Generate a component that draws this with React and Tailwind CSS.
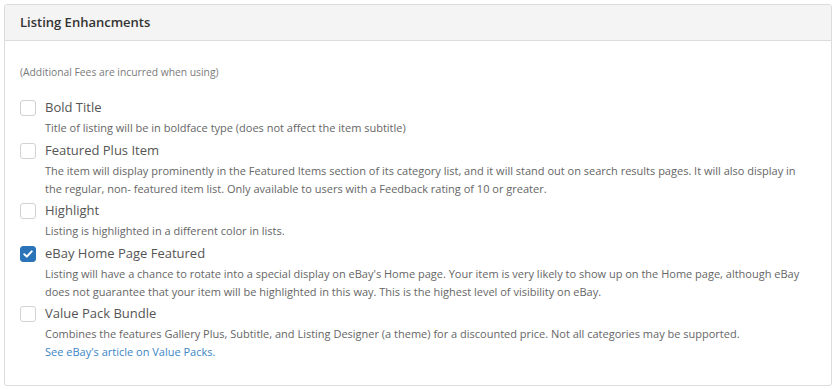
import React, { useState } from "react";

const items = [
  {
    title: "Bold Title",
    desc: "Title of listing will be in boldface type (does not affect the item subtitle)",
  },
  {
    title: "Featured Plus Item",
    desc: "The item will display prominently in the Featured Items section of its category list, and it will stand out on search results pages. It will also display in the regular, non- featured item list. Only available to users with a Feedback rating of 10 or greater.",
  },
  {
    title: "Highlight",
    desc: "Listing is highlighted in a different color in lists.",
  },
  {
    title: "eBay Home Page Featured",
    desc: "Listing will have a chance to rotate into a special display on eBay's Home page. Your item is very likely to show up on the Home page, although eBay does not guarantee that your item will be highlighted in this way. This is the highest level of visibility on eBay.",
    checked: true,
  },
  {
    title: "Value Pack Bundle",
    desc: "Combines the features Gallery Plus, Subtitle, and Listing Designer (a theme) for a discounted price. Not all categories may be supported.",
    link: "See eBay's article on Value Packs.",
  },
];

function Checkbox({ checked, onClick }) {
  return (
    <button
      onClick={onClick}
      className={`w-4 h-4 rounded-[3px] flex items-center justify-center shrink-0 ${
        checked ? "bg-[#2c74b9] border border-[#2c74b9]" : "bg-white border border-[#d2d2d2]"
      }`}
    >
      {checked && (
        <svg width="10" height="8" viewBox="0 0 10 8" fill="none">
          <path d="M1.3 4.2 L3.8 6.6 L8.7 1.4" stroke="white" strokeWidth="2" strokeLinecap="round" strokeLinejoin="round" />
        </svg>
      )}
    </button>
  );
}

export default function App() {
  const [checked, setChecked] = useState(items.map((i) => !!i.checked));

  return (
    <div className="w-[837px] h-[389px] bg-white pt-1 pl-1 font-['Open_Sans',sans-serif]">
      <div className="w-[828px] h-[382px] border border-[#dcdcdc] rounded-[3px] overflow-hidden">
        {/* Header */}
        <div className="h-9 bg-[#f4f4f4] border-b border-[#dcdcdc] flex items-center px-[15px]">
          <h3 className="text-[13px] font-semibold text-[#333]">Listing Enhancments</h3>
        </div>

        {/* Body */}
        <div className="px-[15px] pt-6">
          <p className="text-[10.3px] leading-[14px] text-[#7a7a7a] mb-[18px]">
            (Additional Fees are incurred when using)
          </p>

          {items.map((item, i) => (
            <div key={item.title} className="mb-[2.5px]">
              <label className="flex items-center gap-[9px] h-[22px] cursor-pointer">
                <Checkbox
                  checked={checked[i]}
                  onClick={() => setChecked(checked.map((c, j) => (j === i ? !c : c)))}
                />
                <span className="text-[13px] text-[#555]">{item.title}</span>
              </label>
              <p className="pl-[25px] text-[11px] leading-[18px] text-[#666] pr-2">{item.desc}</p>
              {item.link && (
                <a href="#" className="block pl-[25px] text-[11px] leading-[18px] text-[#3b86c6]">
                  {item.link}
                </a>
              )}
            </div>
          ))}
        </div>
      </div>
    </div>
  );
}
